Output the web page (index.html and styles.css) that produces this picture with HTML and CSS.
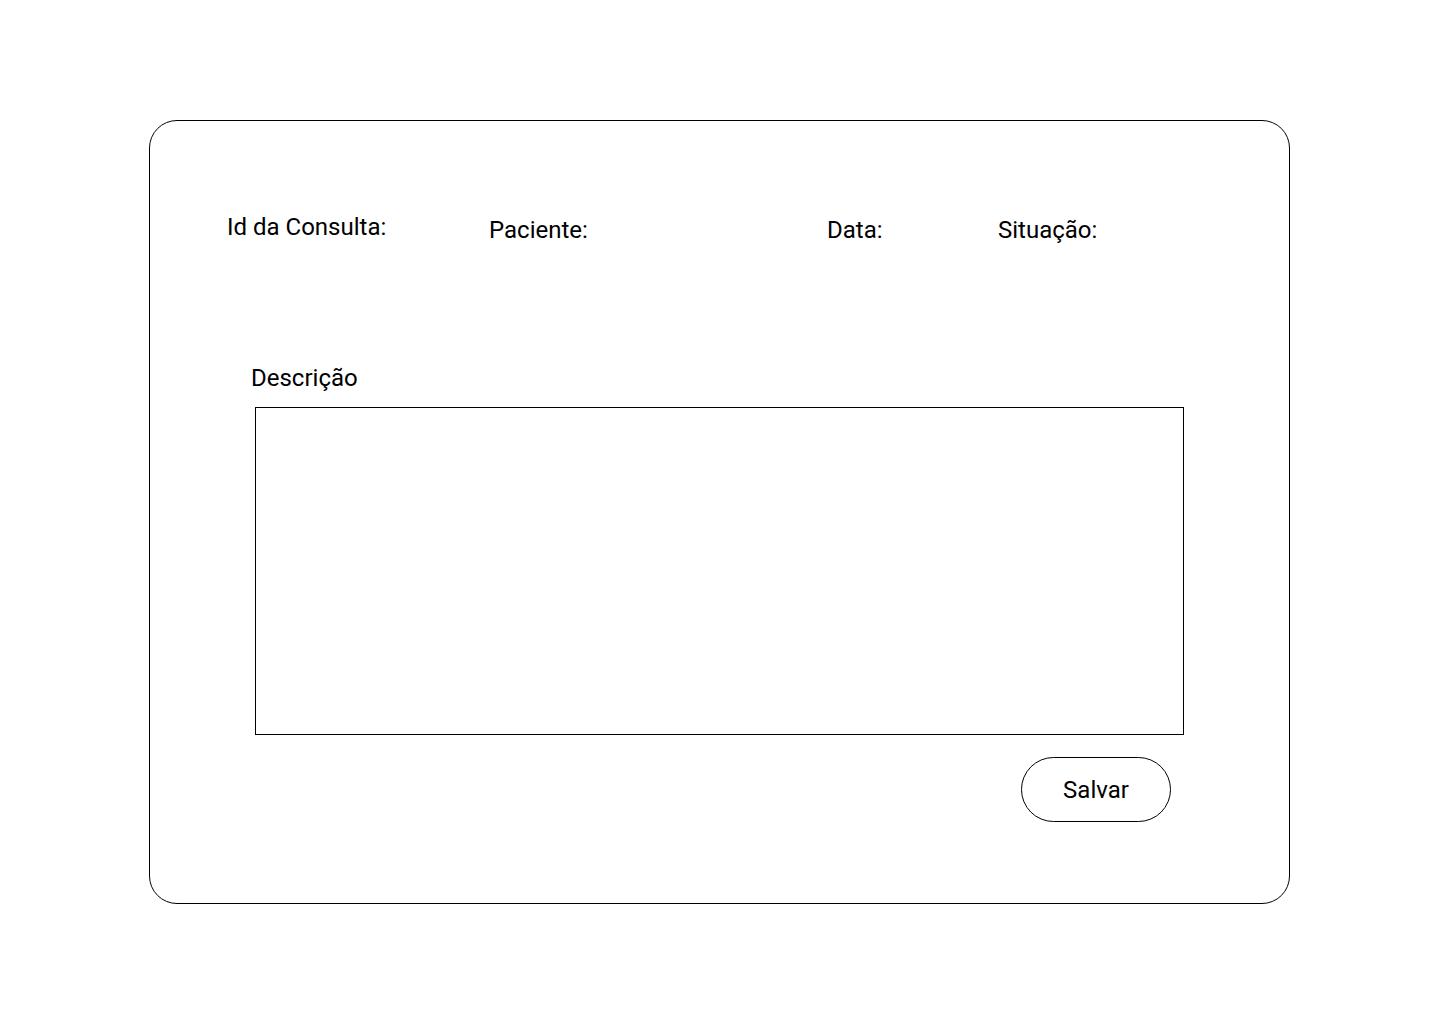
FILE: index.html
```html
<!DOCTYPE html>
<html lang="pt-BR">
<head>
    <meta charset="UTF-8">
    <meta name="viewport" content="width=device-width, initial-scale=1.0">
    <title>Consulta</title>
    <link rel="stylesheet" href="styles.css">
</head>
<body>

    <div class="card">
        <!-- Dados da consulta -->
        <div class="info-row">
            <span class="info-label info-id">Id da Consulta:</span>
            <span class="info-label info-patient">Paciente:</span>
            <span class="info-label info-date">Data:</span>
            <span class="info-label info-status">Situação:</span>
        </div>

        <!-- Descrição -->
        <div class="description">
            <label for="descricao" class="description-label">Descrição</label>
            <textarea id="descricao" class="description-box"></textarea>

            <div class="actions">
                <button type="button" class="save-button">Salvar</button>
            </div>
        </div>
    </div>

</body>
</html>
```

FILE: styles.css
```css
body {
    font-family: Roboto, "Liberation Sans", Arial, sans-serif;
    background-color: #fff;
    color: #000;
    margin: 0;
    padding: 0;
}
.card {
    box-sizing: border-box;
    width: 1141px;
    height: 784px;
    margin: 120px 0 0 149px;
    border: 1px solid #000;
    border-radius: 28px;
    padding: 92px 0 0 77px;
}
.info-row {
    display: flex;
    align-items: flex-start;
}
.info-label {
    font-size: 24px;
    line-height: 28px;
}
.info-id {
    width: 262px;
}
.info-patient {
    width: 338px;
    margin-top: 3px;
}
.info-date {
    width: 171px;
    margin-top: 3px;
}
.info-status {
    margin-top: 3px;
}
.description {
    width: 933px;
    margin: 120px 0 0 24px;
}
.description-label {
    display: block;
    font-size: 24px;
    line-height: 28px;
}
.description-box {
    display: block;
    box-sizing: border-box;
    width: 929px;
    height: 328px;
    margin: 15px 0 0 4px;
    border: 1px solid #000;
    border-radius: 0;
    padding: 10px;
    resize: none;
    font-family: inherit;
    font-size: 18px;
    outline: none;
}
.actions {
    display: flex;
    justify-content: flex-end;
    padding-right: 13px;
    margin-top: 22px;
}
.save-button {
    box-sizing: border-box;
    width: 150px;
    height: 65px;
    background-color: #fff;
    border: 1px solid #000;
    border-radius: 33px;
    font-family: inherit;
    font-size: 24px;
    color: #000;
    cursor: pointer;
}
```
